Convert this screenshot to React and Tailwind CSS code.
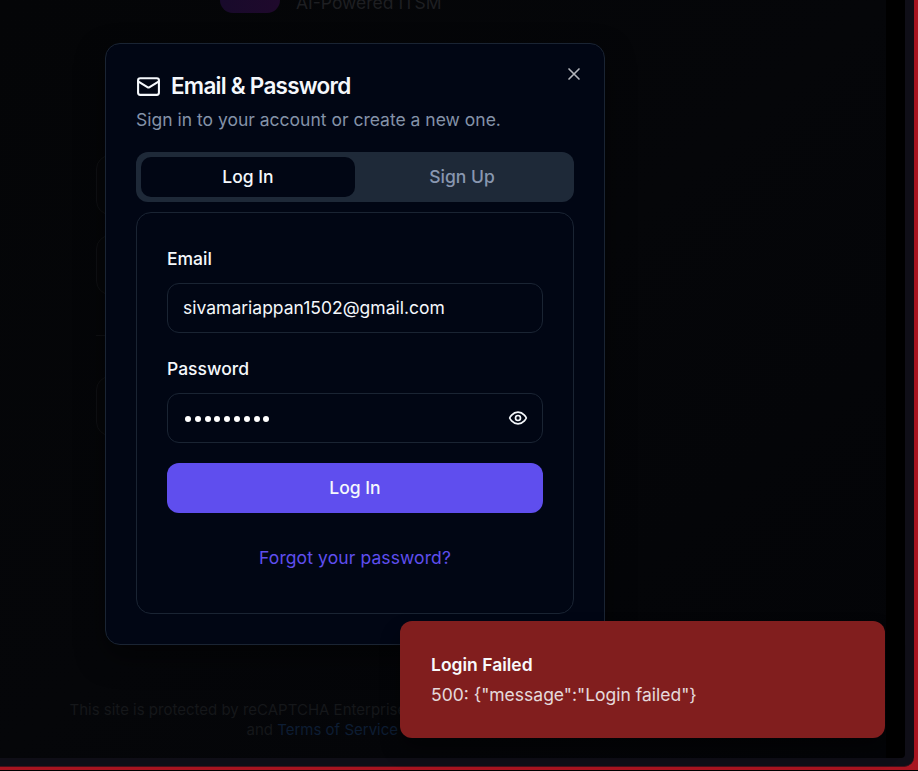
import React from "react";

function MailIcon() {
  return (
    <svg className="h-[25px] w-[25px] shrink-0" viewBox="0 0 24 24" fill="none" stroke="currentColor" strokeWidth="2" strokeLinecap="round" strokeLinejoin="round">
      <rect width="20" height="16" x="2" y="4" rx="2" />
      <path d="m22 7-8.97 5.7a1.94 1.94 0 0 1-2.06 0L2 7" />
    </svg>
  );
}

function EyeIcon() {
  return (
    <svg className="h-5 w-5" viewBox="0 0 24 24" fill="none" stroke="currentColor" strokeWidth="2" strokeLinecap="round" strokeLinejoin="round">
      <path d="M2 12s3-7 10-7 10 7 10 7-3 7-10 7-10-7-10-7Z" />
      <circle cx="12" cy="12" r="3" />
    </svg>
  );
}

function CloseIcon() {
  return (
    <svg className="h-5 w-5" viewBox="0 0 24 24" fill="none" stroke="currentColor" strokeWidth="2" strokeLinecap="round">
      <path d="M18 6 6 18M6 6l12 12" />
    </svg>
  );
}

function Backdrop() {
  return (
    <div className="flex h-[771px] w-[918px] flex-col bg-black">
      <div className="flex h-[770px] bg-[#a81420]">
        <div className="h-[767px] w-[914px] rounded-br-[10px] border-b border-[#45101a] bg-[#0f0e17]">
          <div className="flex h-[758px] w-[905px] overflow-hidden rounded-br-[4px] bg-black">
            <div className="flex w-[886px] flex-col bg-linear-to-br from-[#040507] via-[#050609] to-[#030407]">
              <div className="flex h-[155px] gap-4 pl-[220px]">
                <div className="h-[13px] w-[60px] rounded-b-[15px] bg-linear-to-r from-[#180a2b] to-[#1f092c]" />
                <div className="-mt-[10px] text-[17.5px] leading-[25px] text-[#1e1f22]">AI-Powered ITSM</div>
              </div>
              <div className="ml-[96px] flex w-[456px] flex-col">
                <div className="h-[60px] rounded-[14px] border border-[#101114] bg-[#060709]" />
                <div className="mt-5 h-[60px] rounded-[14px] border border-[#101114] bg-[#060709]" />
                <div className="mt-10 h-px bg-[#101114]" />
                <div className="mt-10 h-[60px] rounded-[14px] border border-[#101114] bg-[#060709]" />
              </div>
              <div className="mt-[264px] ml-[69.5px] text-[15px] leading-5 text-[#15171a]">
                <div>This site is protected by reCAPTCHA Enterprise</div>
                <div className="pl-[177px]">and <span className="text-[#0d1d33]">Terms of Service</span></div>
              </div>
            </div>
          </div>
        </div>
      </div>
    </div>
  );
}

function Dialog() {
  return (
    <div className="absolute top-[43px] left-[105px] flex h-[602px] w-[500px] flex-col rounded-[15px] border border-[#1a2433] bg-[#010614] p-[30px] text-[#f5f8fc] shadow-[0_12px_28px_rgba(0,0,0,0.5)]">
      <button className="absolute top-5 right-5 text-[#b3b5bb]"><CloseIcon /></button>
      <h2 className="flex h-[25px] items-center gap-[10px] text-[22.5px] leading-[25px] font-semibold tracking-[-0.75px]">
        <MailIcon /><span className="-mt-0.5">Email &amp; Password</span>
      </h2>
      <p className="mt-2 text-[17.5px] leading-[25px] text-[#8492a8]">Sign in to your account or create a new one.</p>
      <div className="mt-5 grid h-[50px] shrink-0 grid-cols-2 rounded-[12px] bg-[#1e2938] p-[5px] text-[17.5px] font-medium">
        <div className="flex items-center justify-center rounded-[10px] bg-[#010614]">Log In</div>
        <div className="flex items-center justify-center text-[#8997b0]">Sign Up</div>
      </div>
      <form className="mt-[10px] flex h-[402px] shrink-0 flex-col rounded-[15px] border border-[#1a2433] px-[30px] pt-[33px] text-[17.5px] leading-[25px]">
        <label className="font-medium">Email</label>
        <div className="mt-[12px] flex h-[50px] items-center rounded-[12px] border border-[#1a2433] px-[15px] pb-0.5">sivamariappan1502@gmail.com</div>
        <label className="mt-[23px] font-medium">Password</label>
        <div className="mt-[12px] flex h-[50px] items-center justify-between rounded-[12px] border border-[#1a2433] pr-[14px] pl-[17px]">
          <div className="mt-0.5 flex gap-[3.8px]">
            {Array.from({ length: 9 }, (_, i) => <span key={i} className="h-[6px] w-[6px] rounded-full bg-white" />)}
          </div>
          <EyeIcon />
        </div>
        <div className="mt-5 flex h-[50px] items-center justify-center rounded-[12px] bg-[#5f4eee] pb-0.5 font-medium">Log In</div>
        <a className="mt-8 text-center tracking-[0.1px] text-[#5f4eee]">Forgot your password?</a>
      </form>
    </div>
  );
}

function Toast() {
  return (
    <div className="absolute top-[621px] left-[400px] flex h-[117px] w-[485px] flex-col justify-center rounded-[12px] bg-[#811e1e] px-[31px] text-[17.5px] leading-[25px] text-[#f8fafc] shadow-[0_12px_19px_rgba(0,0,0,0.4)]">
      <div className="font-semibold">Login Failed</div>
      <div className="mt-[5px] opacity-85">{'500: {"message":"Login failed"}'}</div>
    </div>
  );
}

export default function App() {
  return (
    <div className="relative h-[771px] w-[918px] overflow-hidden font-['Inter',sans-serif]">
      <Backdrop />
      <Dialog />
      <Toast />
    </div>
  );
}
